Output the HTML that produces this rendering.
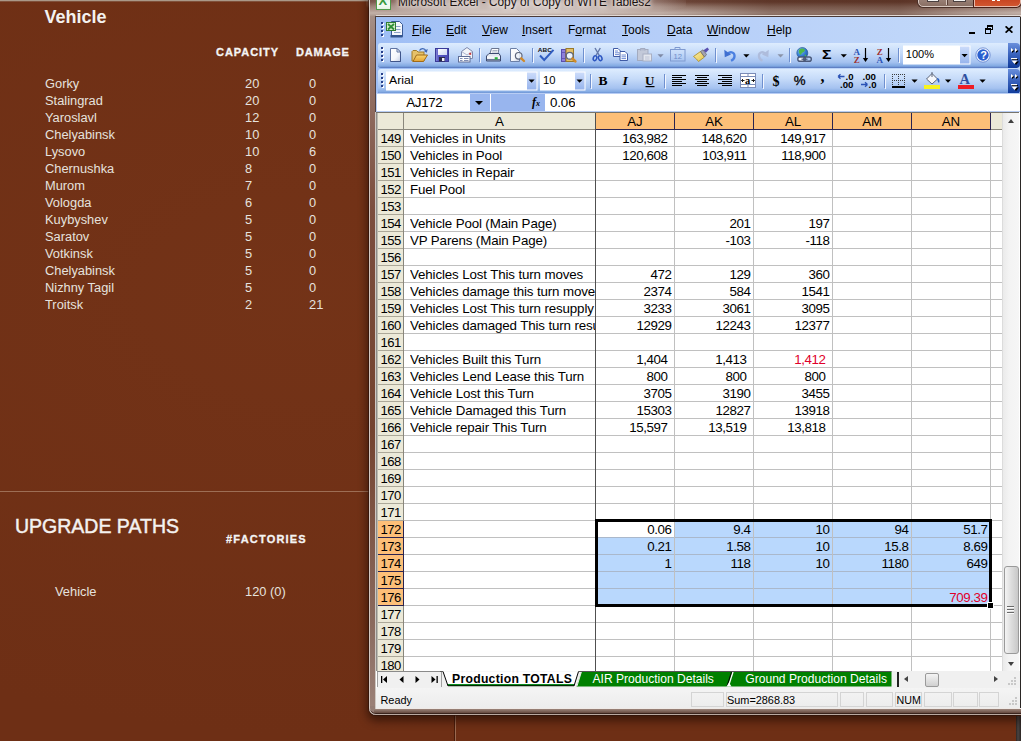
<!DOCTYPE html>
<html><head><meta charset="utf-8"><title>Screenshot</title>
<style>
html,body{margin:0;padding:0;overflow:hidden;}
body{width:1021px;height:741px;overflow:hidden;position:relative;background:#6f3016;font-family:"Liberation Sans",sans-serif;}
.abs{position:absolute;}

#bg{left:0;top:0;width:1021px;height:741px;background:
 radial-gradient(ellipse at 30% 40%, rgba(125,58,28,.35), rgba(0,0,0,0) 70%), #6e2f15;}
#topline{left:0;top:0;width:1021px;height:2px;background:linear-gradient(#aa9888 0,#aa9888 50%,#80503a 50%,#80503a 100%);}
.lt{color:#ececec;white-space:nowrap;}
.title{left:44.5px;top:6.5px;font-size:18px;font-weight:bold;color:#f4f2f0;}
.hd{font-weight:bold;font-size:11px;letter-spacing:0.95px;color:#f4f4f4;-webkit-text-stroke:0.3px #f4f4f4;}
.li{font-size:12.85px;line-height:17px;height:17px;color:#e6e2de;}
#hline{left:0;top:491px;width:370px;height:1px;background:#9d6e55;}
#vline{left:455px;top:715px;width:1px;height:26px;background:#9a6a50;box-shadow:-1px 0 0 #4a1c0a;}
#rstrip{left:1016px;top:716px;width:5px;height:25px;background:linear-gradient(90deg,#2c2624,#4a4442 40%,#2c2624);}
.up{left:15px;top:515px;font-size:19.5px;color:#f4f2f0;-webkit-text-stroke:0.45px #f4f2f0;}


#win{left:369px;top:-12px;width:652px;height:727px;border-radius:7px 0 0 7px;
 background:linear-gradient(180deg,#5e382c 0px,#6f483b 14px,#9c8176 19px,#c2b0a8 25px,#b3a097 27px,#a28b81 29px,#97807a 60px,#947c74 100%);
 box-shadow:inset 1px 0 0 #d3c7c1, inset 0 -1px 0 #b9a8a0, inset 0 -2px 0 #3a241d, 0 0 0 1px rgba(45,18,8,.7), 0 4px 9px 2px rgba(20,5,0,.55);}
#winside{left:370px;top:16px;width:5px;height:690px;background:linear-gradient(180deg,#a58f86 0,#98796e 6%,#7c4e3e 28%,#74432f 60%,#8a6a5e 88%,#9a8077 100%);}
#winhi{left:375px;top:16px;width:1px;height:693px;background:linear-gradient(180deg,#4f4244 0,#4f4244 96px,#cfc8c3 96px,#cfc8c3 100%);}
#winbot{left:376px;top:708px;width:645px;height:1px;background:#efeae7;}
#winbotg{left:374px;top:709px;width:647px;height:4px;background:linear-gradient(#9c857b,#64483e);}
#glow{left:366px;top:-10px;width:320px;height:26px;border-radius:12px;background:radial-gradient(ellipse at center,rgba(255,255,255,.6),rgba(255,255,255,.35) 50%,rgba(255,255,255,0) 75%);}
#wtitle{left:398px;top:-5px;font-size:11.87px;color:#1a1210;white-space:nowrap;text-shadow:0 0 4px #fff,0 0 6px #fff;}
#client{left:376px;top:17px;width:644px;height:691px;background:#fff;overflow:hidden;box-shadow:0 -1px 0 0 #4a3a38, 1px 0 0 0 #2a2624;}
.mb{left:0;top:0;width:645px;height:77px;background:linear-gradient(90deg,#9ebef5 0,#b4cdf8 40%,#c4dafa 100%);}
.mi{top:6px;font-size:12px;color:#000;white-space:nowrap;}
.mi u{text-decoration:underline;text-underline-offset:1px;}
.tb{left:2px;width:630px;height:24px;border-radius:3px 0 0 3px;background:linear-gradient(#ddecfe 0,#c6dbf9 40%,#a5c2f0 80%,#81a9e2 96%,#6b8fd0 100%);box-shadow:0 1px 0 #5f80c4;}
.tbov{left:632px;width:12px;height:25px;border-radius:0 4px 4px 0;background:linear-gradient(#6a8fdc 0,#3a63bd 45%,#0f3a9a 100%);}
.grip{width:2px;height:2px;background:#2a4a9a;box-shadow:1px 1px 0 #fff;}
.sep{width:1px;height:17px;background:#6a8ccf;box-shadow:1px 0 0 #f0f5ff;}
.cbox{background:#fff;height:20px;font-size:12px;line-height:20px;color:#000;}
.dd{width:0;height:0;border-left:3px solid transparent;border-right:3px solid transparent;border-top:3px solid #000;}
.fb{left:0;top:78px;width:645px;height:18px;background:#fff;}
.cell{font-size:13.33px;line-height:17px;height:17px;white-space:nowrap;color:#000;overflow:hidden;letter-spacing:-0.13px;}
.r{text-align:right;letter-spacing:-0.42px;}
.c{text-align:center;}
.hl{height:1px;background:#c0c0c0;}
.vl{width:1px;background:#c0c0c0;}
.rh{left:1px;width:26px;background:#ece9d8;}

</style></head><body>
<div id="bg" class="abs"></div><div id="topline" class="abs"></div>
<div class="abs lt title">Vehicle</div>
<div class="abs lt hd" style="left:216px;top:46px;">CAPACITY</div>
<div class="abs lt hd" style="left:296px;top:46px;letter-spacing:0.8px;">DAMAGE</div>
<div class="abs lt li" style="left:45px;top:75px;">Gorky</div>
<div class="abs lt li" style="left:245px;top:75px;">20</div>
<div class="abs lt li" style="left:309px;top:75px;">0</div>
<div class="abs lt li" style="left:45px;top:92px;">Stalingrad</div>
<div class="abs lt li" style="left:245px;top:92px;">20</div>
<div class="abs lt li" style="left:309px;top:92px;">0</div>
<div class="abs lt li" style="left:45px;top:109px;">Yaroslavl</div>
<div class="abs lt li" style="left:245px;top:109px;">12</div>
<div class="abs lt li" style="left:309px;top:109px;">0</div>
<div class="abs lt li" style="left:45px;top:126px;">Chelyabinsk</div>
<div class="abs lt li" style="left:245px;top:126px;">10</div>
<div class="abs lt li" style="left:309px;top:126px;">0</div>
<div class="abs lt li" style="left:45px;top:143px;">Lysovo</div>
<div class="abs lt li" style="left:245px;top:143px;">10</div>
<div class="abs lt li" style="left:309px;top:143px;">6</div>
<div class="abs lt li" style="left:45px;top:160px;">Chernushka</div>
<div class="abs lt li" style="left:245px;top:160px;">8</div>
<div class="abs lt li" style="left:309px;top:160px;">0</div>
<div class="abs lt li" style="left:45px;top:177px;">Murom</div>
<div class="abs lt li" style="left:245px;top:177px;">7</div>
<div class="abs lt li" style="left:309px;top:177px;">0</div>
<div class="abs lt li" style="left:45px;top:194px;">Vologda</div>
<div class="abs lt li" style="left:245px;top:194px;">6</div>
<div class="abs lt li" style="left:309px;top:194px;">0</div>
<div class="abs lt li" style="left:45px;top:211px;">Kuybyshev</div>
<div class="abs lt li" style="left:245px;top:211px;">5</div>
<div class="abs lt li" style="left:309px;top:211px;">0</div>
<div class="abs lt li" style="left:45px;top:228px;">Saratov</div>
<div class="abs lt li" style="left:245px;top:228px;">5</div>
<div class="abs lt li" style="left:309px;top:228px;">0</div>
<div class="abs lt li" style="left:45px;top:245px;">Votkinsk</div>
<div class="abs lt li" style="left:245px;top:245px;">5</div>
<div class="abs lt li" style="left:309px;top:245px;">0</div>
<div class="abs lt li" style="left:45px;top:262px;">Chelyabinsk</div>
<div class="abs lt li" style="left:245px;top:262px;">5</div>
<div class="abs lt li" style="left:309px;top:262px;">0</div>
<div class="abs lt li" style="left:45px;top:279px;">Nizhny Tagil</div>
<div class="abs lt li" style="left:245px;top:279px;">5</div>
<div class="abs lt li" style="left:309px;top:279px;">0</div>
<div class="abs lt li" style="left:45px;top:296px;">Troitsk</div>
<div class="abs lt li" style="left:245px;top:296px;">2</div>
<div class="abs lt li" style="left:309px;top:296px;">21</div>
<div id="hline" class="abs"></div><div id="vline" class="abs"></div><div id="rstrip" class="abs"></div>
<div class="abs lt up">UPGRADE PATHS</div>
<div class="abs lt hd" style="left:226px;top:533px;letter-spacing:1.2px;">#FACTORIES</div>
<div class="abs lt li" style="left:55px;top:583px;">Vehicle</div>
<div class="abs lt li" style="left:245px;top:583px;">120 (0)</div>
<div id="win" class="abs"></div><div id="winside" class="abs"></div><div id="winhi" class="abs"></div><div id="winbot" class="abs"></div><div id="winbotg" class="abs"></div>
<div class="abs" style="left:370px;top:0;width:651px;height:15px;background:linear-gradient(90deg,rgba(70,30,15,0) 0,rgba(70,30,15,0) 290px,rgba(70,30,15,.4) 400px,rgba(70,30,15,.45) 530px,rgba(70,30,15,.15) 600px,rgba(70,30,15,0) 100%);"></div>
<div class="abs" style="left:376px;top:15px;width:645px;height:1px;background:#e2d9d4;"></div>
<div id="glow" class="abs"></div>
<div class="abs" style="left:376px;top:-6px;width:13px;height:14px;background:linear-gradient(#d8f0d8,#f4fcf4 70%,#e4f4e4);border:1.5px solid #4f9a4a;"><div class="abs" style="left:1.5px;top:-1px;font-size:13px;font-weight:bold;color:#3a9a3e;line-height:13px;">X</div></div>
<div id="wtitle" class="abs">Microsoft Excel - Copy of Copy of WITE Tables2</div>
<div class="abs" style="left:918px;top:-15px;width:55px;height:20px;border-radius:0 0 0 5px;border:1px solid #d8c8c0;background:linear-gradient(#b9a59c,#8a6f64);box-shadow:0 0 0 1px #4a3028;"></div>
<div class="abs" style="left:946px;top:-2px;width:1px;height:7px;background:#d8c8c0;box-shadow:1px 0 0 #5a4038;"></div>
<div class="abs" style="left:974px;top:-15px;width:45px;height:20px;border-radius:0 0 5px 0;border:1px solid #e8b8a8;background:linear-gradient(#e07a5a,#c4411f 60%,#d1552f);box-shadow:0 0 0 1px #4a2018;"></div>
<div class="abs" style="left:927px;top:-3px;width:10px;height:4px;background:#f4f2f0;border:1px solid #4a4040;border-top:0;"></div>
<div class="abs" style="left:953px;top:-3px;width:11px;height:4px;background:#f4f2f0;border:1px solid #4a4040;border-top:0;"></div>
<div class="abs" style="left:992px;top:-3px;width:3px;height:4px;background:#fff;box-shadow:5px 0 0 #fff;"></div>
<div id="client" class="abs"><div class="abs mb"></div>
<svg class="abs" style="left:0;top:0px" width="645" height="26" viewBox="376 17 645 26"><rect x="382" y="23" width="2" height="2" fill="#fff"/><rect x="381" y="22" width="2" height="2" fill="#27408b"/><rect x="382" y="27" width="2" height="2" fill="#fff"/><rect x="381" y="26" width="2" height="2" fill="#27408b"/><rect x="382" y="31" width="2" height="2" fill="#fff"/><rect x="381" y="30" width="2" height="2" fill="#27408b"/><rect x="382" y="35" width="2" height="2" fill="#fff"/><rect x="381" y="34" width="2" height="2" fill="#27408b"/>
<g>
<path d="M391.500 21.5 L399.5 21.5 L402.5 24.5 L402.5 36.5 L391.500 36.5Z" fill="#f4f7fc" stroke="#3a5a95" stroke-width="1"/>
<path d="M390.500 35 L402.500 35 L402.500 37.5 L390.500 37.5Z" fill="#34558f"/>
<path d="M396 26.5 H400.500 M396 29.5 H400.500 M394 32.5 H400.500" stroke="#8ea3c8" stroke-width="1"/>
<rect x="386.5" y="22.5" width="9" height="8" fill="#d4ecc8" stroke="#2f7d32" stroke-width="1"/>
<path d="M388 24 L394 29.5 M394 24 L388 29.5" stroke="#2f8f36" stroke-width="1.800"/>
</g></svg>
<div class="abs mi" style="left:36px;"><u>F</u>ile</div>
<div class="abs mi" style="left:70px;"><u>E</u>dit</div>
<div class="abs mi" style="left:106px;"><u>V</u>iew</div>
<div class="abs mi" style="left:146px;"><u>I</u>nsert</div>
<div class="abs mi" style="left:192px;">F<u>o</u>rmat</div>
<div class="abs mi" style="left:246px;"><u>T</u>ools</div>
<div class="abs mi" style="left:291px;"><u>D</u>ata</div>
<div class="abs mi" style="left:331px;"><u>W</u>indow</div>
<div class="abs mi" style="left:391px;"><u>H</u>elp</div>
<div class="abs" style="left:593px;top:15px;width:6px;height:2px;background:#000;"></div>
<div class="abs" style="left:611px;top:8px;width:4px;height:2px;border:1px solid #000;border-top-width:2px;"></div>
<div class="abs" style="left:609px;top:11px;width:4px;height:3px;border:1px solid #000;border-top-width:2px;background:#c3d8fa;"></div>
<svg class="abs" style="left:629px;top:9px" width="8" height="7" viewBox="0 0 8 7"><path d="M0.600 0.300 L7.400 6.700 M7.400 0.300 L0.600 6.700" stroke="#000" stroke-width="1.700" fill="none"/></svg>
<div class="abs tb" style="top:26px;"></div><div class="abs tbov" style="top:26px;"></div>
<div class="abs tb" style="top:52px;"></div><div class="abs tbov" style="top:52px;"></div>
<svg class="abs" style="left:0;top:26px" width="645" height="25" viewBox="376 43 645 25"><defs><radialGradient id="gl" cx=".35" cy=".3" r=".8"><stop offset="0" stop-color="#7fc0f0"/><stop offset=".6" stop-color="#2f78d0"/><stop offset="1" stop-color="#1f4fa0"/></radialGradient><linearGradient id="bg2" x1="0" y1="0" x2="1" y2="1"><stop offset="0" stop-color="#fbf0a8"/><stop offset="1" stop-color="#e3c24e"/></linearGradient><linearGradient id="pg" x1="0" y1="0" x2="1" y2="1"><stop offset="0" stop-color="#ffffff"/><stop offset=".6" stop-color="#f4f6fb"/><stop offset="1" stop-color="#c3cde3"/></linearGradient><linearGradient id="fg" x1="0" y1="0" x2="0" y2="1"><stop offset="0" stop-color="#fbd66e"/><stop offset="1" stop-color="#e2a236"/></linearGradient><linearGradient id="sg" x1="0" y1="0" x2="1" y2="0"><stop offset="0" stop-color="#8a8ad8"/><stop offset=".25" stop-color="#5656c2"/><stop offset="1" stop-color="#4a4ab4"/></linearGradient><linearGradient id="lg" x1="0" y1="0" x2="1" y2="1"><stop offset="0" stop-color="#ffffff"/><stop offset="1" stop-color="#cdd6f2"/></linearGradient><linearGradient id="ddg" x1="0" y1="0" x2="0" y2="1"><stop offset="0" stop-color="#cfdefb"/><stop offset="1" stop-color="#94b2ec"/></linearGradient></defs><rect x="382" y="48" width="2" height="2" fill="#fff"/><rect x="381" y="47" width="2" height="2" fill="#27408b"/><rect x="382" y="52" width="2" height="2" fill="#fff"/><rect x="381" y="51" width="2" height="2" fill="#27408b"/><rect x="382" y="56" width="2" height="2" fill="#fff"/><rect x="381" y="55" width="2" height="2" fill="#27408b"/><rect x="382" y="60" width="2" height="2" fill="#fff"/><rect x="381" y="59" width="2" height="2" fill="#27408b"/><path d="M390.500 48.500 L397 48.500 L400.500 52 L400.500 61.500 L390.500 61.500Z" fill="url(#pg)" stroke="#5f74a3" stroke-width="1"/><path d="M397 48.500 L397 52 L400.500 52Z" fill="#eef2f9" stroke="#5f74a3" stroke-width="1"/><path d="M390.500 61.500 H400.500 V52" fill="none" stroke="#3f558a" stroke-width="1"/><path d="M412 61 L412 51.500 L413 50.500 L416.500 50.500 L418 52 L424 52 L424 61Z" fill="#e6c169" stroke="#a07a28" stroke-width="1"/><path d="M413 61.500 L416.500 55 L427.500 55 L423.500 61.500Z" fill="url(#fg)" stroke="#a06a18" stroke-width="1"/><path d="M419.500 50.500 C421 48 424.500 47.800 426 50.800" fill="none" stroke="#3f68b5" stroke-width="1.300"/><path d="M427.800 49 L426.800 52.800 L423.600 51Z" fill="#3f68b5"/><rect x="435.500" y="48.500" width="13" height="13" fill="url(#sg)" stroke="#3a3a98" stroke-width="1"/><rect x="438" y="49" width="9" height="6" fill="url(#lg)"/><rect x="439" y="57" width="6" height="4.500" fill="#2a2a48"/><rect x="442" y="58" width="2.500" height="3" fill="#f2f2fa"/><path d="M461.500 57 L461.500 51.500 L467 47.500 L472.500 51.500 L472.500 58.500 L469 58.500" fill="#f3f5fa" stroke="#7d89ad" stroke-width="1"/><path d="M461.500 51.500 L467 55 L472.500 51.500" fill="none" stroke="#9aa5c5" stroke-width=".8"/><rect x="469.200" y="52.800" width="2" height="2" fill="#c63a3a"/><rect x="458.500" y="56.500" width="11.500" height="5.500" fill="#fdfdfe" stroke="#5f6d96" stroke-width="1"/><path d="M460 58.500 H462.500 M460 60.500 H462.500 M464 58.500 H468.500 M464 60.500 H468.500" stroke="#7f8db5" stroke-width="1"/><rect x="479" y="48" width="1" height="14" fill="#6f90cf"/><rect x="480" y="49" width="1" height="14" fill="#f2f6ff"/><path d="M490 53.500 L491.500 48.500 L499 48.500 L498 53.500Z" fill="#fbfcfe" stroke="#6a7590" stroke-width="1"/><path d="M492.500 50.500 H497.500 M492 52 H497" stroke="#9aa3b8" stroke-width=".8"/><path d="M486.500 56 L489 53.500 L499 53.500 L500.500 56 L500.500 61 L486.500 61Z" fill="#e3e7ef" stroke="#3c4a70" stroke-width="1"/><path d="M487 56.500 H500 V58.500 H487Z" fill="#f7f8fb"/><path d="M487 59 H500 V60.800 H487Z" fill="#6a7696"/><rect x="494.700" y="57.200" width="3" height="2.300" fill="#27b13a"/><path d="M510.500 48.500 L516.500 48.500 L519.500 51.500 L519.500 61.500 L510.500 61.500Z" fill="url(#pg)" stroke="#6b7fa6" stroke-width="1"/><circle cx="518.700" cy="55.800" r="3.300" fill="#eef3fa" fill-opacity=".85" stroke="#5d667c" stroke-width="1.200"/><path d="M521.300 58.300 L524 61" stroke="#d08a2a" stroke-width="2.400" stroke-linecap="round"/><rect x="532" y="48" width="1" height="14" fill="#6f90cf"/><rect x="533" y="49" width="1" height="14" fill="#f2f6ff"/><text x="537.800" y="51.800" font-family="Liberation Sans" font-size="6" font-weight="bold" fill="#111" textLength="14" lengthAdjust="spacingAndGlyphs">ABC</text><path d="M540 55.500 L544.200 60 L553.500 49.800" fill="none" stroke="#2f5cc0" stroke-width="2"/><rect x="561.500" y="49.500" width="4" height="12" fill="#8e80da" stroke="#5a4eb0" stroke-width="1"/><path d="M562 52.500 H565 M562 58.500 H565" stroke="#5a4eb0" stroke-width=".8"/><rect x="566" y="48.500" width="7.500" height="13" fill="#e3c068" stroke="#9a7a2a" stroke-width="1"/><circle cx="569.700" cy="55.800" r="3.400" fill="#eef5fc" stroke="#5d667c" stroke-width="1.200"/><path d="M572.300 58.500 L575.500 61.500" stroke="#d08a2a" stroke-width="2.400" stroke-linecap="round"/><rect x="583" y="48" width="1" height="14" fill="#6f90cf"/><rect x="584" y="49" width="1" height="14" fill="#f2f6ff"/><path d="M595 48 L599.300 55.500 M600.300 48 L596 55.500" stroke="#6478a8" stroke-width="1.400" fill="none"/><ellipse cx="595" cy="58.200" rx="1.700" ry="2.500" fill="none" stroke="#2c55c0" stroke-width="1.500" transform="rotate(20 595 58.200)"/><ellipse cx="600.200" cy="58.200" rx="1.700" ry="2.500" fill="none" stroke="#2c55c0" stroke-width="1.500" transform="rotate(-20 600.200 58.200)"/><path d="M613.500 48.500 L618 48.500 L620.500 51 L620.500 56.500 L613.500 56.500Z" fill="#fff" stroke="#3f5aa5" stroke-width="1"/><path d="M620 51.500 L625 51.500 L627.500 54 L627.500 60.500 L620 60.500Z" fill="#fff" stroke="#3f5aa5" stroke-width="1"/><path d="M615 51 H618 M615 52.800 H619 M615 54.600 H619 M621.500 55 H626 M621.500 56.800 H626 M621.500 58.600 H626" stroke="#5f7fd0" stroke-width=".9"/><rect x="637.500" y="49.500" width="10.500" height="11" fill="#c3c9d9" stroke="#a3abc0" stroke-width="1"/><path d="M640.500 50.500 V48.500 H645 V50.500" fill="#b3bace" stroke="#a3abc0" stroke-width="1"/><rect x="643" y="54" width="8.500" height="7" fill="#e3e6ee" stroke="#a9b0c4" stroke-width="1"/><path d="M645 57 H649.500 M645 59 H649.500" stroke="#b9c0d2" stroke-width=".9"/><path d="M657.5 54.2 L663.7 54.2 L660.5 57.400000000000006Z" fill="#7f8aa6"/><rect x="670.500" y="49.500" width="14.500" height="11.500" fill="none" stroke="#7f9ad0" stroke-width="1"/><path d="M675 49.500 V47.500 H680 V49.500" fill="none" stroke="#7f9ad0" stroke-width="1"/><text x="673.500" y="58.800" font-family="Liberation Sans" font-size="8" fill="#6f8cc8" textLength="8.500" lengthAdjust="spacingAndGlyphs">12</text><path d="M693.500 56.500 L700.500 51.500 L704.500 57 L698.500 61.500 L696.500 59Z" fill="url(#bg2)" stroke="#b0922e" stroke-width=".9"/><path d="M700.500 51.500 L703 49.800 L706.500 54.500 L704.500 57Z" fill="#a3a3b0" stroke="#666" stroke-width=".7"/><path d="M703.500 50.200 L707.500 47.500 L709 49.500 L705.800 52.800Z" fill="#5a50b0"/><rect x="715" y="48" width="1" height="14" fill="#6f90cf"/><rect x="716" y="49" width="1" height="14" fill="#f2f6ff"/><path d="M727.500 54 C730.500 50.800 735 52.300 734.500 56.500 C734.200 58.800 732.800 60 731 60.800" fill="none" stroke="#4a7fe0" stroke-width="2.300"/><path d="M724.300 49.800 L724.800 57.300 L731 54.500Z" fill="#3f6fd0"/><path d="M743.3 54.2 L749.5 54.2 L746.3 57.400000000000006Z" fill="#000"/><path d="M765.500 54 C762.500 50.800 758.500 52.300 759 56.500 C759.300 58.800 760.700 60 762.500 60.800" fill="none" stroke="#aebcdc" stroke-width="2.300"/><path d="M768.800 49.800 L768.300 57.300 L762 54.500Z" fill="#aebcdc"/><path d="M777.5 54.2 L783.7 54.2 L780.5 57.400000000000006Z" fill="#8a93a8"/><rect x="789" y="48" width="1" height="14" fill="#6f90cf"/><rect x="790" y="49" width="1" height="14" fill="#f2f6ff"/><circle cx="802.300" cy="53" r="5.500" fill="url(#gl)" stroke="#2a5a9a" stroke-width=".7"/><path d="M799 50 C800.500 48 804 48 805 50 C804.500 52.500 801.500 52 801 55 C799.500 54.500 798.300 52 799 50Z" fill="#4fb84a"/><path d="M804.500 54.500 C806 54 806.800 55.500 806 57 C805 56.500 804.500 55.500 804.500 54.500Z" fill="#4fb84a"/><rect x="797.800" y="57" width="7.500" height="4.300" rx="2.100" fill="#f4f6fa" stroke="#4a5878" stroke-width="1.400"/><rect x="803.800" y="57" width="7.500" height="4.300" rx="2.100" fill="none" stroke="#4a5878" stroke-width="1.400"/><rect x="801.500" y="58.600" width="6" height="1.200" fill="#4a5878"/><text x="822" y="59" font-family="Liberation Sans" font-size="12" font-weight="bold" fill="#000" textLength="9.500" lengthAdjust="spacingAndGlyphs">Σ</text><path d="M840.7 54.2 L846.9000000000001 54.2 L843.7 57.400000000000006Z" fill="#000"/><text x="853.500" y="54.500" font-family="Liberation Serif" font-size="9" font-weight="bold" fill="#2b52b5">A</text><text x="853.800" y="62.500" font-family="Liberation Serif" font-size="9" font-weight="bold" fill="#a03030">Z</text><path d="M865.500 48 V60" stroke="#000" stroke-width="1.2"/><path d="M862.800 58 L868.200 58 L865.500 62Z" fill="#000"/><text x="876.800" y="54.500" font-family="Liberation Serif" font-size="9" font-weight="bold" fill="#a03030">Z</text><text x="876.500" y="62.500" font-family="Liberation Serif" font-size="9" font-weight="bold" fill="#2b52b5">A</text><path d="M888.500 48 V60" stroke="#000" stroke-width="1.2"/><path d="M885.800 58 L891.200 58 L888.500 62Z" fill="#000"/><rect x="898" y="48" width="1" height="14" fill="#6f90cf"/><rect x="899" y="49" width="1" height="14" fill="#f2f6ff"/><rect x="903" y="45.500" width="56" height="19" fill="#fff"/><rect x="959" y="45.500" width="11" height="19" fill="url(#ddg)"/><rect x="959.500" y="46" width="10.500" height="18" fill="none" stroke="#fff" stroke-width="1"/><text x="905.800" y="57.800" font-family="Liberation Sans" font-size="11" fill="#000" textLength="28.200" lengthAdjust="spacingAndGlyphs">100%</text><path d="M961.5 54 L967.7 54 L964.5 57.2Z" fill="#000"/><circle cx="983" cy="55" r="6.300" fill="#2a5fcf" stroke="#f0f5ff" stroke-width="1.200"/><circle cx="983" cy="55" r="7.200" fill="none" stroke="#5a7ac8" stroke-width=".7"/><text x="980.200" y="59" font-family="Liberation Sans" font-size="11" font-weight="bold" fill="#fff">?</text><path d="M1012 49 l2.500 2 l-2.500 2Z M1016 49 l2.500 2 l-2.500 2Z" fill="#000"/><path d="M1011 48 l2.500 2 l-2.500 2Z M1015 48 l2.500 2 l-2.500 2Z" fill="#fff"/><rect x="1012" y="59" width="6" height="1.200" fill="#000"/><path d="M1013 61.5 L1019 61.5 L1016 65Z" fill="#000"/><rect x="1011" y="58" width="6" height="1.200" fill="#fff"/><path d="M1011.500 60.5 L1017.500 60.5 L1014.500 64Z" fill="#fff"/></svg>
<svg class="abs" style="left:0;top:51px" width="645" height="26" viewBox="376 68 645 26"><defs><linearGradient id="ddg2" x1="0" y1="0" x2="0" y2="1"><stop offset="0" stop-color="#cfdefb"/><stop offset="1" stop-color="#94b2ec"/></linearGradient></defs><rect x="382" y="74" width="2" height="2" fill="#fff"/><rect x="381" y="73" width="2" height="2" fill="#27408b"/><rect x="382" y="78" width="2" height="2" fill="#fff"/><rect x="381" y="77" width="2" height="2" fill="#27408b"/><rect x="382" y="82" width="2" height="2" fill="#fff"/><rect x="381" y="81" width="2" height="2" fill="#27408b"/><rect x="382" y="86" width="2" height="2" fill="#fff"/><rect x="381" y="85" width="2" height="2" fill="#27408b"/><rect x="386" y="71.500" width="140" height="19" fill="#fff"/><rect x="526" y="71.500" width="11" height="19" fill="url(#ddg2)"/><rect x="526.500" y="72" width="10.500" height="18" fill="none" stroke="#fff" stroke-width="1"/><text x="389" y="83.700" font-family="Liberation Sans" font-size="11" fill="#000" textLength="24.500" lengthAdjust="spacingAndGlyphs">Arial</text><path d="M528.5 79.5 L534.7 79.5 L531.5 82.7Z" fill="#000"/><rect x="540" y="71.500" width="34" height="19" fill="#fff"/><rect x="574" y="71.500" width="11" height="19" fill="url(#ddg2)"/><rect x="574.500" y="72" width="10.500" height="18" fill="none" stroke="#fff" stroke-width="1"/><text x="543" y="83.700" font-family="Liberation Sans" font-size="11" fill="#000" textLength="12.500" lengthAdjust="spacingAndGlyphs">10</text><path d="M576.5 79.5 L582.7 79.5 L579.5 82.7Z" fill="#000"/><rect x="590" y="74" width="1" height="14" fill="#6f90cf"/><rect x="591" y="75" width="1" height="14" fill="#f2f6ff"/><text x="598.500" y="85" font-family="Liberation Serif" font-size="13.500" font-weight="bold" fill="#000">B</text><text x="622.500" y="85" font-family="Liberation Serif" font-size="13.500" font-weight="bold" font-style="italic" fill="#000">I</text><text x="645" y="84.500" font-family="Liberation Serif" font-size="13" font-weight="bold" fill="#000">U</text><rect x="645.500" y="86" width="9" height="1.200" fill="#000"/><rect x="664" y="74" width="1" height="14" fill="#6f90cf"/><rect x="665" y="75" width="1" height="14" fill="#f2f6ff"/><rect x="672" y="75" width="14" height="1" fill="#000"/><rect x="672" y="77" width="10" height="1" fill="#000"/><rect x="672" y="79" width="14" height="1" fill="#000"/><rect x="672" y="81" width="10" height="1" fill="#000"/><rect x="672" y="83" width="14" height="1" fill="#000"/><rect x="672" y="85" width="10" height="1" fill="#000"/><rect x="695" y="75" width="14" height="1" fill="#000"/><rect x="697" y="77" width="10" height="1" fill="#000"/><rect x="695" y="79" width="14" height="1" fill="#000"/><rect x="697" y="81" width="10" height="1" fill="#000"/><rect x="695" y="83" width="14" height="1" fill="#000"/><rect x="697" y="85" width="10" height="1" fill="#000"/><rect x="718" y="75" width="14" height="1" fill="#000"/><rect x="722" y="77" width="10" height="1" fill="#000"/><rect x="718" y="79" width="14" height="1" fill="#000"/><rect x="722" y="81" width="10" height="1" fill="#000"/><rect x="718" y="83" width="14" height="1" fill="#000"/><rect x="722" y="85" width="10" height="1" fill="#000"/><rect x="740.500" y="73.500" width="15" height="14" fill="#fff" stroke="#7a8cb8" stroke-width="1"/><path d="M740.500 76.500 H755.500 M740.500 84.500 H755.500 M748 73.500 V76.500 M748 84.500 V87.500" stroke="#7a8cb8" stroke-width="1"/><text x="745" y="84" font-family="Liberation Serif" font-size="10.500" font-weight="bold" fill="#000">a</text><path d="M741.500 80.500 H744.500 M751.500 80.500 H754.500 M741.500 80.500 l1.500 -1.500 M741.500 80.500 l1.500 1.500 M754.500 80.500 l-1.500 -1.500 M754.500 80.500 l-1.500 1.500" stroke="#000" stroke-width=".9" fill="none"/><rect x="762" y="74" width="1" height="14" fill="#6f90cf"/><rect x="763" y="75" width="1" height="14" fill="#f2f6ff"/><text x="772.500" y="85.500" font-family="Liberation Serif" font-size="14" font-weight="bold" fill="#000">$</text><text x="793.800" y="85.300" font-family="Liberation Sans" font-size="13" fill="#000" stroke="#000" stroke-width=".3" textLength="11.800" lengthAdjust="spacingAndGlyphs">%</text><text x="820.500" y="82" font-family="Liberation Serif" font-size="16" font-weight="bold" fill="#000">,</text><text x="845.500" y="80.300" font-family="Liberation Sans" font-size="8.500" font-weight="bold" fill="#000" textLength="8" lengthAdjust="spacingAndGlyphs">.0</text><text x="840" y="87.500" font-family="Liberation Sans" font-size="8.500" font-weight="bold" fill="#000" textLength="13.500" lengthAdjust="spacingAndGlyphs">.00</text><path d="M838 76.500 H844.500 M838 76.500 l2.500 -2.200 M838 76.500 l2.500 2.200" stroke="#2b52b5" stroke-width="1.300" fill="none"/><text x="862.500" y="80.300" font-family="Liberation Sans" font-size="8.500" font-weight="bold" fill="#000" textLength="13.500" lengthAdjust="spacingAndGlyphs">.00</text><text x="868.500" y="87.500" font-family="Liberation Sans" font-size="8.500" font-weight="bold" fill="#000" textLength="8" lengthAdjust="spacingAndGlyphs">.0</text><path d="M861 84.500 H867.500 M867.500 84.500 l-2.500 -2.200 M867.500 84.500 l-2.500 2.200" stroke="#2b52b5" stroke-width="1.300" fill="none"/><rect x="884" y="74" width="1" height="14" fill="#6f90cf"/><rect x="885" y="75" width="1" height="14" fill="#f2f6ff"/><g shape-rendering="crispEdges"><path d="M892.500 74 V87 M904.500 74 V87 M898.500 74 V87 M892 74.500 H905 M892 80.500 H905" stroke="#3a3a3a" stroke-width="1" stroke-dasharray="1 1" fill="none"/><rect x="892" y="86" width="13" height="2" fill="#000"/></g><path d="M911.5 79.5 L917.7 79.5 L914.5 82.7Z" fill="#000"/><path d="M926.500 79 L932 73.500 L937.500 79 L932 84Z" fill="#f6f8fc" stroke="#5a6478" stroke-width="1"/><path d="M932 72 V77" stroke="#5a6478" stroke-width="1"/><path d="M937 78 C939.500 78 940 81 939 83 C937.500 82 937.500 80 937 78Z" fill="#2b62c5"/><rect x="924" y="85" width="16" height="4" fill="#f7f321"/><path d="M945 79.5 L951.2 79.5 L948 82.7Z" fill="#000"/><text x="959.500" y="84" font-family="Liberation Serif" font-size="14.500" font-weight="bold" fill="#2f4f9f">A</text><rect x="958" y="85" width="16" height="4" fill="#ee1c25"/><path d="M979.5 79.5 L985.7 79.5 L982.5 82.7Z" fill="#000"/><path d="M1012 75 l2.500 2 l-2.500 2Z M1016 75 l2.500 2 l-2.500 2Z" fill="#000"/><path d="M1011 74 l2.500 2 l-2.500 2Z M1015 74 l2.500 2 l-2.500 2Z" fill="#fff"/><rect x="1012" y="85" width="6" height="1.200" fill="#000"/><path d="M1013 87.5 L1019 87.5 L1016 91Z" fill="#000"/><rect x="1011" y="84" width="6" height="1.200" fill="#fff"/><path d="M1011.500 86.5 L1017.500 86.5 L1014.500 90Z" fill="#fff"/></svg>
<div class="abs" style="left:0;top:76px;width:645px;height:19px;background:#b8cdf4;"></div>
<div class="abs" style="left:1px;top:77px;width:93px;height:17px;background:#fff;"></div>
<div class="abs cell" style="left:1px;top:77px;width:93px;padding-left:29.3px;box-sizing:border-box;letter-spacing:-0.35px;">AJ172</div>
<div class="abs" style="left:94px;top:77px;width:20px;height:17px;background:#9ab7ef;"></div>
<div class="abs dd" style="left:99px;top:84px;border-left-width:4px;border-right-width:4px;border-top-width:4px;"></div>
<div class="abs" style="left:114px;top:77px;width:1px;height:17px;background:#fff;"></div>
<div class="abs" style="left:115px;top:77px;width:54px;height:17px;background:#98b5ee;"></div>
<div class="abs" style="left:156px;top:77px;font:italic bold 12px 'Liberation Serif',serif;line-height:16px;color:#000;">f<span style="font-size:8px;font-style:italic;">x</span></div>
<div class="abs" style="left:169px;top:77px;width:476px;height:17px;background:#fff;"></div>
<div class="abs cell" style="left:174px;top:77px;">0.06</div>
<div class="abs" style="left:0px;top:95px;width:626px;height:18px;background:#ece9d8;"></div>
<div class="abs" style="left:0px;top:95px;width:643px;height:1px;background:#77746c;z-index:3;"></div>
<div class="abs" style="left:220px;top:96px;width:394px;height:16px;background:#fdbf78;"></div>
<div class="abs" style="left:220px;top:112px;width:395px;height:1px;background:#2a2350;"></div>
<div class="abs" style="left:1px;top:112px;width:219px;height:1px;background:#8a877c;"></div>
<div class="abs" style="left:615px;top:112px;width:11px;height:1px;background:#8a877c;"></div>
<div class="abs cell c" style="left:28px;top:96px;width:191px;">A</div>
<div class="abs cell c" style="left:220px;top:96px;width:78px;">AJ</div>
<div class="abs cell c" style="left:299px;top:96px;width:78px;">AK</div>
<div class="abs cell c" style="left:378px;top:96px;width:78px;">AL</div>
<div class="abs cell c" style="left:457px;top:96px;width:78px;">AM</div>
<div class="abs cell c" style="left:536px;top:96px;width:78px;">AN</div>
<div class="abs" style="left:27px;top:96px;width:1px;height:16px;background:#8a877c;"></div>
<div class="abs" style="left:298px;top:96px;width:1px;height:17px;background:#2a2350;"></div>
<div class="abs" style="left:377px;top:96px;width:1px;height:17px;background:#2a2350;"></div>
<div class="abs" style="left:456px;top:96px;width:1px;height:17px;background:#2a2350;"></div>
<div class="abs" style="left:535px;top:96px;width:1px;height:17px;background:#2a2350;"></div>
<div class="abs" style="left:614px;top:96px;width:1px;height:17px;background:#2a2350;"></div>
<div class="abs" style="left:0px;top:95px;width:1px;height:559px;background:#8e8e8a;box-shadow:1px 0 0 #bdbbb0;z-index:2;"></div>
<div class="abs" style="left:1px;top:113px;width:27px;height:541px;background:#ece9d8;"></div>
<div class="abs" style="left:1px;top:504px;width:26px;height:84px;background:#fdbf78;"></div>
<div class="abs" style="left:27px;top:113px;width:1px;height:541px;background:#8a877c;"></div>
<div class="abs" style="left:27px;top:504px;width:1px;height:85px;background:#2a2350;"></div>
<div class="abs" style="left:220px;top:504px;width:394px;height:84px;background:#b9d8fd;"></div>
<div class="abs" style="left:221px;top:505px;width:77px;height:15px;background:#fff;"></div>
<div class="abs hl" style="left:28px;top:129px;width:598px;"></div>
<div class="abs" style="left:1px;top:129px;width:26px;height:1px;background:#aca899;"></div>
<div class="abs hl" style="left:28px;top:146px;width:598px;"></div>
<div class="abs" style="left:1px;top:146px;width:26px;height:1px;background:#aca899;"></div>
<div class="abs hl" style="left:28px;top:163px;width:598px;"></div>
<div class="abs" style="left:1px;top:163px;width:26px;height:1px;background:#aca899;"></div>
<div class="abs hl" style="left:28px;top:180px;width:598px;"></div>
<div class="abs" style="left:1px;top:180px;width:26px;height:1px;background:#aca899;"></div>
<div class="abs hl" style="left:28px;top:197px;width:598px;"></div>
<div class="abs" style="left:1px;top:197px;width:26px;height:1px;background:#aca899;"></div>
<div class="abs hl" style="left:28px;top:214px;width:598px;"></div>
<div class="abs" style="left:1px;top:214px;width:26px;height:1px;background:#aca899;"></div>
<div class="abs hl" style="left:28px;top:231px;width:598px;"></div>
<div class="abs" style="left:1px;top:231px;width:26px;height:1px;background:#aca899;"></div>
<div class="abs hl" style="left:28px;top:248px;width:598px;"></div>
<div class="abs" style="left:1px;top:248px;width:26px;height:1px;background:#aca899;"></div>
<div class="abs hl" style="left:28px;top:265px;width:598px;"></div>
<div class="abs" style="left:1px;top:265px;width:26px;height:1px;background:#aca899;"></div>
<div class="abs hl" style="left:28px;top:282px;width:598px;"></div>
<div class="abs" style="left:1px;top:282px;width:26px;height:1px;background:#aca899;"></div>
<div class="abs hl" style="left:28px;top:299px;width:598px;"></div>
<div class="abs" style="left:1px;top:299px;width:26px;height:1px;background:#aca899;"></div>
<div class="abs hl" style="left:28px;top:316px;width:598px;"></div>
<div class="abs" style="left:1px;top:316px;width:26px;height:1px;background:#aca899;"></div>
<div class="abs hl" style="left:28px;top:333px;width:598px;"></div>
<div class="abs" style="left:1px;top:333px;width:26px;height:1px;background:#aca899;"></div>
<div class="abs hl" style="left:28px;top:350px;width:598px;"></div>
<div class="abs" style="left:1px;top:350px;width:26px;height:1px;background:#aca899;"></div>
<div class="abs hl" style="left:28px;top:367px;width:598px;"></div>
<div class="abs" style="left:1px;top:367px;width:26px;height:1px;background:#aca899;"></div>
<div class="abs hl" style="left:28px;top:384px;width:598px;"></div>
<div class="abs" style="left:1px;top:384px;width:26px;height:1px;background:#aca899;"></div>
<div class="abs hl" style="left:28px;top:401px;width:598px;"></div>
<div class="abs" style="left:1px;top:401px;width:26px;height:1px;background:#aca899;"></div>
<div class="abs hl" style="left:28px;top:418px;width:598px;"></div>
<div class="abs" style="left:1px;top:418px;width:26px;height:1px;background:#aca899;"></div>
<div class="abs hl" style="left:28px;top:435px;width:598px;"></div>
<div class="abs" style="left:1px;top:435px;width:26px;height:1px;background:#aca899;"></div>
<div class="abs hl" style="left:28px;top:452px;width:598px;"></div>
<div class="abs" style="left:1px;top:452px;width:26px;height:1px;background:#aca899;"></div>
<div class="abs hl" style="left:28px;top:469px;width:598px;"></div>
<div class="abs" style="left:1px;top:469px;width:26px;height:1px;background:#aca899;"></div>
<div class="abs hl" style="left:28px;top:486px;width:598px;"></div>
<div class="abs" style="left:1px;top:486px;width:26px;height:1px;background:#aca899;"></div>
<div class="abs hl" style="left:28px;top:503px;width:598px;"></div>
<div class="abs" style="left:1px;top:503px;width:26px;height:1px;background:#aca899;"></div>
<div class="abs hl" style="left:28px;top:520px;width:598px;"></div>
<div class="abs hl" style="left:220px;top:520px;width:394px;background:#aab8cb;"></div>
<div class="abs" style="left:1px;top:520px;width:26px;height:1px;background:#2a2350;"></div>
<div class="abs hl" style="left:28px;top:537px;width:598px;"></div>
<div class="abs hl" style="left:220px;top:537px;width:394px;background:#aab8cb;"></div>
<div class="abs" style="left:1px;top:537px;width:26px;height:1px;background:#2a2350;"></div>
<div class="abs hl" style="left:28px;top:554px;width:598px;"></div>
<div class="abs hl" style="left:220px;top:554px;width:394px;background:#aab8cb;"></div>
<div class="abs" style="left:1px;top:554px;width:26px;height:1px;background:#2a2350;"></div>
<div class="abs hl" style="left:28px;top:571px;width:598px;"></div>
<div class="abs hl" style="left:220px;top:571px;width:394px;background:#aab8cb;"></div>
<div class="abs" style="left:1px;top:571px;width:26px;height:1px;background:#2a2350;"></div>
<div class="abs hl" style="left:28px;top:588px;width:598px;"></div>
<div class="abs" style="left:1px;top:588px;width:26px;height:1px;background:#2a2350;"></div>
<div class="abs hl" style="left:28px;top:605px;width:598px;"></div>
<div class="abs" style="left:1px;top:605px;width:26px;height:1px;background:#aca899;"></div>
<div class="abs hl" style="left:28px;top:622px;width:598px;"></div>
<div class="abs" style="left:1px;top:622px;width:26px;height:1px;background:#aca899;"></div>
<div class="abs hl" style="left:28px;top:639px;width:598px;"></div>
<div class="abs" style="left:1px;top:639px;width:26px;height:1px;background:#aca899;"></div>
<div class="abs vl" style="left:298px;top:113px;height:541px;"></div>
<div class="abs vl" style="left:377px;top:113px;height:541px;"></div>
<div class="abs vl" style="left:456px;top:113px;height:541px;"></div>
<div class="abs vl" style="left:535px;top:113px;height:541px;"></div>
<div class="abs vl" style="left:614px;top:113px;height:541px;"></div>
<div class="abs" style="left:219px;top:96px;width:1px;height:558px;background:#505050;"></div>
<div class="abs cell" style="left:4.5px;top:113px;width:24px;font-size:13.1px;letter-spacing:-0.5px;">149</div>
<div class="abs cell" style="left:4.5px;top:130px;width:24px;font-size:13.1px;letter-spacing:-0.5px;">150</div>
<div class="abs cell" style="left:4.5px;top:147px;width:24px;font-size:13.1px;letter-spacing:-0.5px;">151</div>
<div class="abs cell" style="left:4.5px;top:164px;width:24px;font-size:13.1px;letter-spacing:-0.5px;">152</div>
<div class="abs cell" style="left:4.5px;top:181px;width:24px;font-size:13.1px;letter-spacing:-0.5px;">153</div>
<div class="abs cell" style="left:4.5px;top:198px;width:24px;font-size:13.1px;letter-spacing:-0.5px;">154</div>
<div class="abs cell" style="left:4.5px;top:215px;width:24px;font-size:13.1px;letter-spacing:-0.5px;">155</div>
<div class="abs cell" style="left:4.5px;top:232px;width:24px;font-size:13.1px;letter-spacing:-0.5px;">156</div>
<div class="abs cell" style="left:4.5px;top:249px;width:24px;font-size:13.1px;letter-spacing:-0.5px;">157</div>
<div class="abs cell" style="left:4.5px;top:266px;width:24px;font-size:13.1px;letter-spacing:-0.5px;">158</div>
<div class="abs cell" style="left:4.5px;top:283px;width:24px;font-size:13.1px;letter-spacing:-0.5px;">159</div>
<div class="abs cell" style="left:4.5px;top:300px;width:24px;font-size:13.1px;letter-spacing:-0.5px;">160</div>
<div class="abs cell" style="left:4.5px;top:317px;width:24px;font-size:13.1px;letter-spacing:-0.5px;">161</div>
<div class="abs cell" style="left:4.5px;top:334px;width:24px;font-size:13.1px;letter-spacing:-0.5px;">162</div>
<div class="abs cell" style="left:4.5px;top:351px;width:24px;font-size:13.1px;letter-spacing:-0.5px;">163</div>
<div class="abs cell" style="left:4.5px;top:368px;width:24px;font-size:13.1px;letter-spacing:-0.5px;">164</div>
<div class="abs cell" style="left:4.5px;top:385px;width:24px;font-size:13.1px;letter-spacing:-0.5px;">165</div>
<div class="abs cell" style="left:4.5px;top:402px;width:24px;font-size:13.1px;letter-spacing:-0.5px;">166</div>
<div class="abs cell" style="left:4.5px;top:419px;width:24px;font-size:13.1px;letter-spacing:-0.5px;">167</div>
<div class="abs cell" style="left:4.5px;top:436px;width:24px;font-size:13.1px;letter-spacing:-0.5px;">168</div>
<div class="abs cell" style="left:4.5px;top:453px;width:24px;font-size:13.1px;letter-spacing:-0.5px;">169</div>
<div class="abs cell" style="left:4.5px;top:470px;width:24px;font-size:13.1px;letter-spacing:-0.5px;">170</div>
<div class="abs cell" style="left:4.5px;top:487px;width:24px;font-size:13.1px;letter-spacing:-0.5px;">171</div>
<div class="abs cell" style="left:4.5px;top:504px;width:24px;font-size:13.1px;letter-spacing:-0.5px;">172</div>
<div class="abs cell" style="left:4.5px;top:521px;width:24px;font-size:13.1px;letter-spacing:-0.5px;">173</div>
<div class="abs cell" style="left:4.5px;top:538px;width:24px;font-size:13.1px;letter-spacing:-0.5px;">174</div>
<div class="abs cell" style="left:4.5px;top:555px;width:24px;font-size:13.1px;letter-spacing:-0.5px;">175</div>
<div class="abs cell" style="left:4.5px;top:572px;width:24px;font-size:13.1px;letter-spacing:-0.5px;">176</div>
<div class="abs cell" style="left:4.5px;top:589px;width:24px;font-size:13.1px;letter-spacing:-0.5px;">177</div>
<div class="abs cell" style="left:4.5px;top:606px;width:24px;font-size:13.1px;letter-spacing:-0.5px;">178</div>
<div class="abs cell" style="left:4.5px;top:623px;width:24px;font-size:13.1px;letter-spacing:-0.5px;">179</div>
<div class="abs cell" style="left:4.5px;top:640px;width:24px;font-size:13.1px;letter-spacing:-0.5px;">180</div>
<div class="abs cell" style="left:34px;top:113px;width:185px;">Vehicles in Units</div>
<div class="abs cell" style="left:34px;top:130px;width:185px;">Vehicles in Pool</div>
<div class="abs cell" style="left:34px;top:147px;width:185px;">Vehicles in Repair</div>
<div class="abs cell" style="left:34px;top:164px;width:185px;">Fuel Pool</div>
<div class="abs cell" style="left:34px;top:198px;width:185px;">Vehicle Pool (Main Page)</div>
<div class="abs cell" style="left:34px;top:215px;width:185px;">VP Parens (Main Page)</div>
<div class="abs cell" style="left:34px;top:249px;width:185px;">Vehicles Lost This turn moves</div>
<div class="abs cell" style="left:34px;top:266px;width:185px;">Vehicles damage this turn moves</div>
<div class="abs cell" style="left:34px;top:283px;width:185px;">Vehicles Lost This turn resupply</div>
<div class="abs cell" style="left:34px;top:300px;width:185px;">Vehicles damaged This turn resupply</div>
<div class="abs cell" style="left:34px;top:334px;width:185px;">Vehicles Built this Turn</div>
<div class="abs cell" style="left:34px;top:351px;width:185px;">Vehicles Lend Lease this Turn</div>
<div class="abs cell" style="left:34px;top:368px;width:185px;">Vehicle Lost this Turn</div>
<div class="abs cell" style="left:34px;top:385px;width:185px;">Vehicle Damaged this Turn</div>
<div class="abs cell" style="left:34px;top:402px;width:185px;">Vehicle repair This Turn</div>
<div class="abs cell r" style="left:220px;top:113px;width:71.5px;color:#000;">163,982</div>
<div class="abs cell r" style="left:299px;top:113px;width:71.5px;color:#000;">148,620</div>
<div class="abs cell r" style="left:378px;top:113px;width:71.5px;color:#000;">149,917</div>
<div class="abs cell r" style="left:220px;top:130px;width:71.5px;color:#000;">120,608</div>
<div class="abs cell r" style="left:299px;top:130px;width:71.5px;color:#000;">103,911</div>
<div class="abs cell r" style="left:378px;top:130px;width:71.5px;color:#000;">118,900</div>
<div class="abs cell r" style="left:299px;top:198px;width:75.5px;color:#000;">201</div>
<div class="abs cell r" style="left:378px;top:198px;width:75.5px;color:#000;">197</div>
<div class="abs cell r" style="left:299px;top:215px;width:75.5px;color:#000;">-103</div>
<div class="abs cell r" style="left:378px;top:215px;width:75.5px;color:#000;">-118</div>
<div class="abs cell r" style="left:220px;top:249px;width:75.5px;color:#000;">472</div>
<div class="abs cell r" style="left:299px;top:249px;width:75.5px;color:#000;">129</div>
<div class="abs cell r" style="left:378px;top:249px;width:75.5px;color:#000;">360</div>
<div class="abs cell r" style="left:220px;top:266px;width:75.5px;color:#000;">2374</div>
<div class="abs cell r" style="left:299px;top:266px;width:75.5px;color:#000;">584</div>
<div class="abs cell r" style="left:378px;top:266px;width:75.5px;color:#000;">1541</div>
<div class="abs cell r" style="left:220px;top:283px;width:75.5px;color:#000;">3233</div>
<div class="abs cell r" style="left:299px;top:283px;width:75.5px;color:#000;">3061</div>
<div class="abs cell r" style="left:378px;top:283px;width:75.5px;color:#000;">3095</div>
<div class="abs cell r" style="left:220px;top:300px;width:75.5px;color:#000;">12929</div>
<div class="abs cell r" style="left:299px;top:300px;width:75.5px;color:#000;">12243</div>
<div class="abs cell r" style="left:378px;top:300px;width:75.5px;color:#000;">12377</div>
<div class="abs cell r" style="left:220px;top:334px;width:71.5px;color:#000;">1,404</div>
<div class="abs cell r" style="left:299px;top:334px;width:71.5px;color:#000;">1,413</div>
<div class="abs cell r" style="left:378px;top:334px;width:71.5px;color:#e0002a;">1,412</div>
<div class="abs cell r" style="left:220px;top:351px;width:71.5px;color:#000;">800</div>
<div class="abs cell r" style="left:299px;top:351px;width:71.5px;color:#000;">800</div>
<div class="abs cell r" style="left:378px;top:351px;width:71.5px;color:#000;">800</div>
<div class="abs cell r" style="left:220px;top:368px;width:75.5px;color:#000;">3705</div>
<div class="abs cell r" style="left:299px;top:368px;width:75.5px;color:#000;">3190</div>
<div class="abs cell r" style="left:378px;top:368px;width:75.5px;color:#000;">3455</div>
<div class="abs cell r" style="left:220px;top:385px;width:75.5px;color:#000;">15303</div>
<div class="abs cell r" style="left:299px;top:385px;width:75.5px;color:#000;">12827</div>
<div class="abs cell r" style="left:378px;top:385px;width:75.5px;color:#000;">13918</div>
<div class="abs cell r" style="left:220px;top:402px;width:71.5px;color:#000;">15,597</div>
<div class="abs cell r" style="left:299px;top:402px;width:71.5px;color:#000;">13,519</div>
<div class="abs cell r" style="left:378px;top:402px;width:71.5px;color:#000;">13,818</div>
<div class="abs cell r" style="left:220px;top:504px;width:75.5px;color:#000;">0.06</div>
<div class="abs cell r" style="left:299px;top:504px;width:75.5px;color:#000;">9.4</div>
<div class="abs cell r" style="left:378px;top:504px;width:75.5px;color:#000;">10</div>
<div class="abs cell r" style="left:457px;top:504px;width:75.5px;color:#000;">94</div>
<div class="abs cell r" style="left:536px;top:504px;width:75.5px;color:#000;">51.7</div>
<div class="abs cell r" style="left:220px;top:521px;width:75.5px;color:#000;">0.21</div>
<div class="abs cell r" style="left:299px;top:521px;width:75.5px;color:#000;">1.58</div>
<div class="abs cell r" style="left:378px;top:521px;width:75.5px;color:#000;">10</div>
<div class="abs cell r" style="left:457px;top:521px;width:75.5px;color:#000;">15.8</div>
<div class="abs cell r" style="left:536px;top:521px;width:75.5px;color:#000;">8.69</div>
<div class="abs cell r" style="left:220px;top:538px;width:75.5px;color:#000;">1</div>
<div class="abs cell r" style="left:299px;top:538px;width:75.5px;color:#000;">118</div>
<div class="abs cell r" style="left:378px;top:538px;width:75.5px;color:#000;">10</div>
<div class="abs cell r" style="left:457px;top:538px;width:75.5px;color:#000;">1180</div>
<div class="abs cell r" style="left:536px;top:538px;width:75.5px;color:#000;">649</div>
<div class="abs cell r" style="left:536px;top:572px;width:75.5px;color:#e0002a;">709.39</div>
<div class="abs" style="left:219px;top:502px;width:397px;height:88px;box-sizing:border-box;border:3px solid #000;"></div>
<div class="abs" style="left:611px;top:585px;width:7px;height:7px;background:#fff;"></div>
<div class="abs" style="left:612px;top:586px;width:5px;height:5px;background:#000;"></div>
<div class="abs" style="left:626px;top:95px;width:17px;height:560px;background:linear-gradient(90deg,#e9e9e9,#f3f3f3 40%,#f6f6f6);"></div>
<div class="abs" style="left:626px;top:95px;width:1px;height:560px;background:#dcdcdc;"></div>
<div class="abs" style="left:632px;top:102px;width:0;height:0;border-left:3.5px solid transparent;border-right:3.5px solid transparent;border-bottom:4px solid #404040;"></div>
<div class="abs" style="left:628px;top:549px;width:13px;height:86px;border:1px solid #9a9a9a;border-radius:3px;background:linear-gradient(90deg,#f4f4f4,#dcdcdc 50%,#c8c8c8);"></div>
<div class="abs" style="left:631px;top:589px;width:7px;height:1px;background:#6a6a6a;box-shadow:0 1px 0 #fafafa;"></div>
<div class="abs" style="left:631px;top:592px;width:7px;height:1px;background:#6a6a6a;box-shadow:0 1px 0 #fafafa;"></div>
<div class="abs" style="left:631px;top:595px;width:7px;height:1px;background:#6a6a6a;box-shadow:0 1px 0 #fafafa;"></div>
<div class="abs" style="left:632px;top:645px;width:0;height:0;border-left:3.5px solid transparent;border-right:3.5px solid transparent;border-top:4px solid #404040;"></div>
<div class="abs" style="left:1px;top:654px;width:644px;height:17px;background:#f0f0f0;"></div>
<div class="abs" style="left:1px;top:654px;width:520px;height:1px;background:#8a8a8a;"></div>
<div class="abs" style="left:1px;top:655px;width:1px;height:15px;background:#a0a0a0;"></div>
<svg class="abs" style="left:2px;top:655px" width="64" height="15" viewBox="0 0 64 15">
<g fill="#000"><rect x="3" y="4" width="1.3" height="7"/><path d="M9 4 L9 11 L5 7.5Z"/>
<path d="M25.5 4 L25.5 11 L21.5 7.5Z"/><path d="M37.5 4 L37.5 11 L41.5 7.5Z"/>
<path d="M53.5 4 L53.5 11 L57.5 7.5Z"/><rect x="58.5" y="4" width="1.3" height="7"/></g></svg>
<svg class="abs" style="left:64px;top:654px" width="460" height="17" viewBox="0 0 460 17">
<path d="M0 0 L460 0 L460 17 L0 17Z" fill="#f0f0f0"/>
<path d="M141.500 0.5 L451.500 0.5 L451.500 15.500 L136.500 15.500 Z" fill="#008000"/>
<path d="M3 0.5 L138.500 0.5 L134 15 L8 15 Z" fill="#fff"/>
<path d="M3 0.5 L8 15" stroke="#000" stroke-width="1" fill="none"/>
<path d="M8 14.500 L134 14.500" stroke="#002a00" stroke-width="1.300" fill="none"/>
<path d="M8 13.500 L134 13.500" stroke="#0a8a1e" stroke-width="1" fill="none"/>
<path d="M138.500 0.5 L134 15" stroke="#000" stroke-width="1" fill="none"/>
<path d="M141.500 0.5 L137 15" stroke="#e8f0e8" stroke-width="1" fill="none"/>
<path d="M293 1 L288.500 15" stroke="#fff" stroke-width="1.300" fill="none"/>
<path d="M291.500 1 L287 15" stroke="#000" stroke-width="1" fill="none"/>
<path d="M286.500 15.500 L289 11.500 L291.500 15.500Z" fill="#fff"/>
<path d="M0 0.5 L3 0.5 M138.500 0.5 L451.500 0.5" stroke="#555" stroke-width="1"/><path d="M1.5 1 V16" stroke="#a0a0a0" stroke-width="1"/>
</svg>
<div class="abs tabt" style="left:76px;top:655px;font-size:12.2px;font-weight:bold;line-height:15px;white-space:nowrap;color:#000;letter-spacing:0.28px;">Production TOTALS</div>
<div class="abs tabt" style="left:216.5px;top:655px;font-size:12.07px;line-height:15px;white-space:nowrap;color:#fff;">AIR Production Details</div>
<div class="abs tabt" style="left:369.29999999999995px;top:655px;font-size:12.08px;line-height:15px;white-space:nowrap;color:#fff;">Ground Production Details</div>
<div class="abs" style="left:521px;top:655px;width:2px;height:15px;background:#222;"></div>
<div class="abs" style="left:528px;top:659px;width:0;height:0;border-top:3.5px solid transparent;border-bottom:3.5px solid transparent;border-right:4px solid #444;"></div>
<div class="abs" style="left:618px;top:659px;width:0;height:0;border-top:3.5px solid transparent;border-bottom:3.5px solid transparent;border-left:4px solid #444;"></div>
<div class="abs" style="left:549px;top:656px;width:12px;height:12px;border:1px solid #9a9a9a;border-radius:2px;background:linear-gradient(#f4f4f4,#d0d0d0);"></div>
<div class="abs" style="left:0;top:671px;width:645px;height:21px;background:linear-gradient(#f4f4f4,#ececec);"></div>
<div class="abs" style="left:4.5px;top:676px;font-size:10.9px;line-height:15px;color:#000;">Ready</div>
<div class="abs" style="left:315px;top:675px;width:31px;height:13px;border:1px solid #d4d4d4;"></div>
<div class="abs" style="left:350px;top:675px;width:110px;height:13px;border:1px solid #d4d4d4;"></div>
<div class="abs" style="left:464px;top:675px;width:22px;height:13px;border:1px solid #d4d4d4;"></div>
<div class="abs" style="left:490px;top:675px;width:25px;height:13px;border:1px solid #d4d4d4;"></div>
<div class="abs" style="left:519px;top:675px;width:25px;height:13px;border:1px solid #d4d4d4;"></div>
<div class="abs" style="left:548px;top:675px;width:26px;height:13px;border:1px solid #d4d4d4;"></div>
<div class="abs" style="left:577px;top:675px;width:23px;height:13px;border:1px solid #d4d4d4;"></div>
<div class="abs" style="left:603px;top:675px;width:18px;height:13px;border:1px solid #d4d4d4;"></div>
<div class="abs" style="left:351px;top:676px;font-size:10.9px;line-height:15px;color:#000;">Sum=2868.83</div>
<div class="abs" style="left:520.5px;top:676px;font-size:10.7px;line-height:15px;color:#000;">NUM</div>
<div class="abs" style="left:632px;top:666px;width:2px;height:2px;background:#c8c8c8;"></div>
<div class="abs" style="left:635px;top:663px;width:2px;height:2px;background:#c8c8c8;"></div>
<div class="abs" style="left:635px;top:666px;width:2px;height:2px;background:#c8c8c8;"></div>
<div class="abs" style="left:638px;top:660px;width:2px;height:2px;background:#c8c8c8;"></div>
<div class="abs" style="left:638px;top:663px;width:2px;height:2px;background:#c8c8c8;"></div>
<div class="abs" style="left:638px;top:666px;width:2px;height:2px;background:#c8c8c8;"></div>
<div class="abs" style="left:633px;top:686px;width:2px;height:2px;background:#c8c8c8;"></div>
<div class="abs" style="left:636px;top:683px;width:2px;height:2px;background:#c8c8c8;"></div>
<div class="abs" style="left:636px;top:686px;width:2px;height:2px;background:#c8c8c8;"></div>
<div class="abs" style="left:639px;top:680px;width:2px;height:2px;background:#c8c8c8;"></div>
<div class="abs" style="left:639px;top:683px;width:2px;height:2px;background:#c8c8c8;"></div>
<div class="abs" style="left:639px;top:686px;width:2px;height:2px;background:#c8c8c8;"></div></div>
</body></html>
